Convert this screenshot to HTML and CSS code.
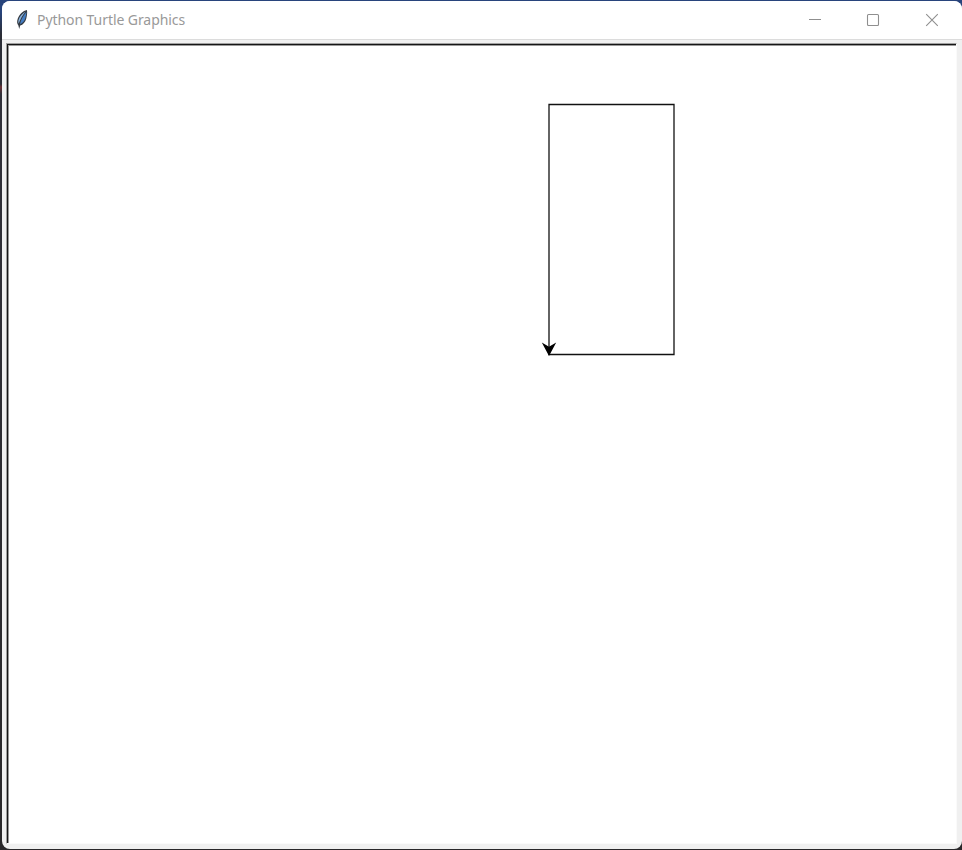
FILE: index.html
```html
<!DOCTYPE html>
<html lang="en">
<head>
<meta charset="utf-8">
<title>Python Turtle Graphics</title>
<link rel="stylesheet" href="styles.css">
</head>
<body>
<main class="window">
  <header class="titlebar">
    <svg class="feather" width="14" height="20" viewBox="0 0 14 20" aria-hidden="true">
      <path d="M11.9 0C8 .7 4.2 4.5 2.7 8.8c-.9 2.6-.8 4.9.7 6.6l.8 3.6 1-3.4c2.8-1 5.3-3.5 6.1-7.2.7-3 1.2-5.7.6-8.4z" fill="#343a42"/>
      <path d="M10.6 1.5C7.4 3.4 4.3 6.6 3.6 10c-.4 1.6-.3 2.8.1 3.6C5 9.8 7.3 5.4 10.6 1.5z" fill="#8ab4df"/>
      <path d="M11.4 2C8 6 5.8 10 5 14.2c2.3-1 4.5-3.2 5.3-6 .5-2 1.2-4.3 1.1-6.2z" fill="#447dc2"/>
    </svg>
    <h1 class="title">Python Turtle Graphics</h1>
    <div class="controls">
      <button class="control" aria-label="Minimize"><svg width="14" height="14" viewBox="0 0 14 14"><path d="M1 6.5h12"/></svg></button>
      <button class="control" aria-label="Maximize"><svg width="14" height="14" viewBox="0 0 14 14"><rect x="1.5" y="1.5" width="11" height="11" rx="1"/></svg></button>
      <button class="control" aria-label="Close"><svg width="14" height="14" viewBox="0 0 14 14"><path d="M1.2 1.2l11.6 11.6M12.8 1.2L1.2 12.8"/></svg></button>
    </div>
  </header>
  <section class="frame">
    <div class="canvas">
      <svg width="948" height="798" viewBox="9 46 948 798">
        <path class="trail" d="M549 354.5H674V104.5H549Z"/>
        <path d="M549 356L541.8 342.6L549 346.8L556.2 342.6Z" fill="#000"/>
      </svg>
    </div>
  </section>
</main>
</body>
</html>
```
FILE: styles.css
```css
* {
  box-sizing: border-box;
}

body {
  margin: 0;
  height: 850px;
  padding: 1px 0 1px 2px;
  overflow: hidden;
  background: linear-gradient(#28447c 0, #28447c 12px, #2b2d36 34px, #2b2d36 84px, #6b3034 87px, #303039 94px, #29282a 100%);
  font-family: "Open Sans", "Noto Sans", sans-serif;
}

.window {
  display: flex;
  flex-direction: column;
  height: 848px;
  overflow: hidden;
  border-radius: 8px;
  background: #f0f0f0;
}

.titlebar {
  display: flex;
  flex: 0 0 39px;
  align-items: center;
  padding: 0 1px 0 13px;
  border-bottom: 1px solid #dcdcdc;
  background: #fff;
}

.feather {
  flex: none;
}

.title {
  margin: 0 0 0 8px;
  width: 160px;
  color: #999;
  font: 400 14px/20px "Noto Sans", "Open Sans", sans-serif;
  letter-spacing: -0.07px;
  white-space: nowrap;
}

.controls {
  display: flex;
  margin-left: auto;
}

.control {
  display: grid;
  place-items: center;
  width: 58.5px;
  height: 38px;
  padding: 0;
  border: 0;
  background: transparent;
}

.control svg {
  fill: none;
  stroke: #8f8f8f;
  stroke-width: 1.1;
}

.frame {
  flex: 1;
  padding: 3px 5px 5px 4px;
}

.canvas {
  height: 801px;
  overflow: hidden;
  border: 1px solid #a0a0a0;
  border-right-color: #fafafa;
  border-bottom-color: #fafafa;
  background: #fff;
  box-shadow: inset 1px 1px 0 #151515, inset 2px 2px 0 #999;
}

.canvas svg {
  display: block;
  margin: 2px 0 0 2px;
}

.trail {
  fill: none;
  stroke: #111;
  stroke-width: 1.3;
}
```
